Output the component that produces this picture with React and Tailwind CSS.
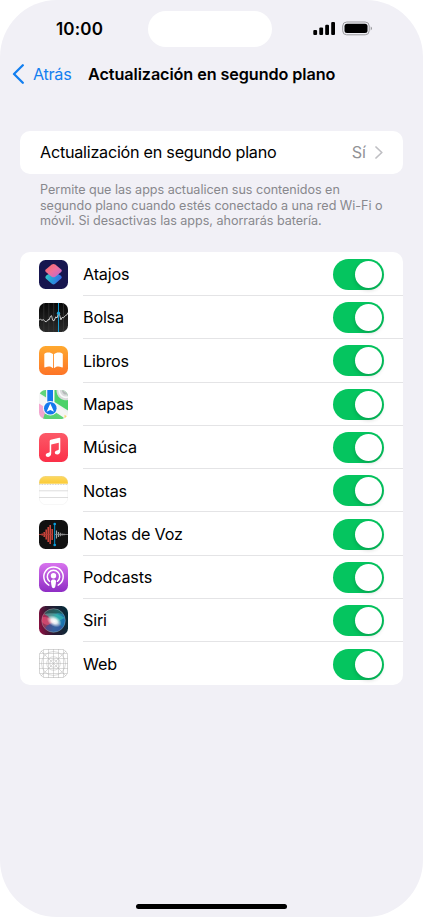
import { useState } from "react";

function ShortcutsIcon() {
  return (
    <>
      <defs>
        <linearGradient id="sc-top" x1="0" y1="0" x2="1" y2="1">
          <stop offset="0" stopColor="#fb6a5c" />
          <stop offset="0.5" stopColor="#ee6f9c" />
          <stop offset="1" stopColor="#b565d8" />
        </linearGradient>
        <linearGradient id="sc-bottom" x1="0" y1="0" x2="1" y2="0.3">
          <stop offset="0" stopColor="#3fd3bd" />
          <stop offset="0.5" stopColor="#25a0d8" />
          <stop offset="1" stopColor="#3a6fe6" />
        </linearGradient>
      </defs>
      <rect width="29" height="29" fill="#17164f" />
      <path d="M7.5 15.2 L13 12.2 Q14.5 11.2 16 12.2 L22 15.7 Q23.6 17.2 22.2 18.6 L16.2 23.8 Q14.5 25.1 12.8 23.8 L6.8 18.6 Q5.4 17 7.5 15.2Z" fill="url(#sc-bottom)" />
      <path d="M6.8 9.4 L12.7 4.5 Q14.5 3.3 16.3 4.5 L22.2 9.4 Q23.6 10.8 22.2 12.1 L16.3 16.7 Q14.5 17.9 12.7 16.7 L6.8 12.1 Q5.4 10.8 6.8 9.4Z" fill="url(#sc-top)" />
    </>
  );
}

function StocksIcon() {
  return (
    <>
      <defs>
        <linearGradient id="st-bg" x1="0" y1="0" x2="0" y2="1">
          <stop offset="0" stopColor="#080808" />
          <stop offset="1" stopColor="#2b2b2b" />
        </linearGradient>
      </defs>
      <rect width="29" height="29" fill="url(#st-bg)" />
      <path d="M4.8 0V29M9.8 0V29M14.7 0V29M24.5 0V29" stroke="#3a3a3a" strokeWidth="0.7" />
      <path d="M19.5 0V29" stroke="#159bd0" strokeWidth="1" />
      <path d="M0 17 L1.5 16.3 L3 17.3 L4.5 16.6 L6 18.5 L7.6 18.7 L9 16.5 L10 17 L11.5 13.3 L12.6 12.7 L13.6 17.2 L15 17.8 L16.8 13.8 L18 15 L19.5 10.2 L20.7 12.2 L21.9 16.8 L23 14.5 L24.5 14.8 L26.5 12.4 L27.8 12 L29 9.5" fill="none" stroke="#e4e4e4" strokeWidth="0.85" strokeLinejoin="round" />
      <circle cx="19.5" cy="10.2" r="1.6" fill="#1fa9df" />
    </>
  );
}

function BooksIcon() {
  return (
    <>
      <defs>
        <linearGradient id="bk-bg" x1="0" y1="0" x2="0" y2="1">
          <stop offset="0" stopColor="#ffa92f" />
          <stop offset="1" stopColor="#fd7427" />
        </linearGradient>
      </defs>
      <rect width="29" height="29" fill="url(#bk-bg)" />
      <path d="M14.1 8.3 C12 5.9 7.3 5.9 5.3 7.9 V20.8 Q5.3 22 6.5 21.3 C8.7 20.1 11.8 20.2 13.3 21.7 Q14.1 22.3 14.1 21.3Z" fill="#fff" />
      <path d="M15 8.3 C17.1 5.9 21.8 5.9 23.8 7.9 V20.8 Q23.8 22 22.6 21.3 C20.4 20.1 17.3 20.2 15.8 21.7 Q15 22.3 15 21.3Z" fill="#fff" />
    </>
  );
}

function MapsIcon() {
  return (
    <>
      <rect width="29" height="29" fill="#f0f1f2" />
      <path d="M0 0H7.2V7.5L0 3Z" fill="#5fd57a" />
      <path d="M0 12L8 12V29H0Z" fill="#f3a6cf" />
      <path d="M0 4.5L29 23V29H24L0 13.5Z" fill="#f5f5f5" />
      <path d="M15.5 0H29V20.5L15.5 12Z" fill="#4bd26a" />
      <path d="M10 18L24.5 27.5V29H8Z" fill="#5bd577" />
      <path d="M17.5 0A9.5 9.5 0 0 0 29 10V0Z" fill="#d9dcdc" />
      <path d="M20 0A7 7 0 0 0 29 7" fill="none" stroke="#f9fafa" strokeWidth="1.6" />
      <path d="M23 0A4 4 0 0 0 29 4" fill="#b3b9b8" />
      <path d="M25.5 29V24.8L29 27V29Z" fill="#f8d872" />
      <path d="M7.3 0H15V22H7.3Z" fill="#f8f9fa" />
      <path d="M8.3 0H14V14H8.3Z" fill="#1478ed" />
      <path d="M6 23L16 24.5L22 29H4Z" fill="#58d374" />
      <circle cx="11.3" cy="18.3" r="7.3" fill="#f8fafb" />
      <circle cx="11.3" cy="18.3" r="6.3" fill="#1478ed" />
      <path d="M11.3 13.6L15 21.8L11.3 20L7.6 21.8Z" fill="#fff" />
    </>
  );
}

function MusicIcon() {
  return (
    <>
      <defs>
        <linearGradient id="ms-bg" x1="0" y1="0" x2="0" y2="1">
          <stop offset="0" stopColor="#fc5a68" />
          <stop offset="1" stopColor="#fb2f48" />
        </linearGradient>
      </defs>
      <rect width="29" height="29" fill="url(#ms-bg)" />
      <path d="M10.7 8.1Q10.7 7 11.7 6.7L20.2 4.7Q21.3 4.5 21.3 5.6V18.2C21.3 20 20 21.3 18.3 21.5C16.9 21.6 15.8 20.8 15.8 19.6C15.8 18.4 16.7 17.7 18 17.4L19.2 17.1Q19.8 16.9 19.8 16.2V9.7L12.2 11.4V20.6C12.2 22.5 11 23.8 9.2 24C7.8 24.1 6.7 23.3 6.7 22.1C6.7 20.9 7.6 20.2 8.9 19.9L10.1 19.6Q10.7 19.4 10.7 18.7Z" fill="#fff" />
    </>
  );
}

function NotesIcon() {
  return (
    <>
      <defs>
        <linearGradient id="nt-top" x1="0" y1="0" x2="0" y2="1">
          <stop offset="0" stopColor="#fdd964" />
          <stop offset="1" stopColor="#fbcb36" />
        </linearGradient>
      </defs>
      <rect width="29" height="29" fill="#fff" />
      <rect width="29" height="7.7" fill="url(#nt-top)" />
      <path d="M0 8.5H29" stroke="#b8b4a8" strokeWidth="0.7" strokeDasharray="0.8 0.8" />
      <path d="M0 14.8H29M0 21.5H29" stroke="#cfcfcf" strokeWidth="0.7" />
      <rect x="0.25" y="0.25" width="28.5" height="28.5" rx="6.3" fill="none" stroke="#d6d6d6" strokeOpacity="0.55" strokeWidth="0.5" />
    </>
  );
}

function VoiceMemosIcon() {
  return (
    <>
      <rect width="29" height="29" fill="#111" />
      <path d="M1.2 14V15M3.2 13.5V15.5M5.2 12V17M7.2 9.5V19.5M9.2 7V22M11.2 5V24M13.2 9V20" stroke="#c9433a" strokeWidth="1.6" />
      <path d="M0 14.5H14" stroke="#b33c35" strokeWidth="0.8" />
      <path d="M17.5 10.5V18.5M19.4 12V17M21.3 12.8V16.2M23.1 13.4V15.6M25 13.8V15.2" stroke="#a7a7a9" strokeWidth="1.1" />
      <path d="M16 14.5H29" stroke="#929294" strokeWidth="0.8" />
      <path d="M15.7 4V25" stroke="#0b95d2" strokeWidth="1" />
      <circle cx="15.7" cy="4" r="1.3" fill="#0b9fdf" />
      <circle cx="15.7" cy="25" r="1.3" fill="#0b9fdf" />
    </>
  );
}

function PodcastsIcon() {
  return (
    <>
      <defs>
        <linearGradient id="pc-bg" x1="0" y1="0" x2="0" y2="1">
          <stop offset="0" stopColor="#d873ee" />
          <stop offset="1" stopColor="#8e2dc4" />
        </linearGradient>
      </defs>
      <rect width="29" height="29" fill="url(#pc-bg)" />
      <path d="M9.8 22.1A9.7 9.7 0 1 1 19.2 22.1" fill="none" stroke="#fff" strokeWidth="1.5" strokeLinecap="round" />
      <path d="M10.5 18.3A6.2 6.2 0 1 1 18.5 18.3" fill="none" stroke="#fff" strokeWidth="1.5" strokeLinecap="round" />
      <circle cx="14.5" cy="12.7" r="2.7" fill="#fff" />
      <path d="M12 18.2C12 15.8 17 15.8 17 18.2C17 20 16.5 22.6 16.1 24.1C15.7 25.5 13.3 25.5 12.9 24.1C12.5 22.6 12 20 12 18.2Z" fill="#fff" />
    </>
  );
}

function SiriIcon() {
  return (
    <>
      <defs>
        <linearGradient id="si-bg" x1="0" y1="0.6" x2="1" y2="0.4">
          <stop offset="0" stopColor="#86103f" />
          <stop offset="0.4" stopColor="#2c1a33" />
          <stop offset="1" stopColor="#052b38" />
        </linearGradient>
        <linearGradient id="si-orb" x1="0" y1="0.35" x2="1" y2="0.6">
          <stop offset="0" stopColor="#b81f4f" />
          <stop offset="0.35" stopColor="#7a4a66" />
          <stop offset="0.6" stopColor="#2f93a6" />
          <stop offset="1" stopColor="#1467b0" />
        </linearGradient>
        <radialGradient id="si-glow">
          <stop offset="0" stopColor="#fff" />
          <stop offset="0.4" stopColor="#fff" stopOpacity="0.85" />
          <stop offset="1" stopColor="#fff" stopOpacity="0" />
        </radialGradient>
      </defs>
      <rect width="29" height="29" fill="url(#si-bg)" />
      <circle cx="14.5" cy="14.5" r="11.8" fill="url(#si-orb)" />
      <path d="M5 7.5C9 1.5 20 1 24.5 8.5C19 6 12 8.5 5 7.5Z" fill="#1c5a58" opacity="0.85" />
      <path d="M5 8.5C11 6 19 7 26 12C22 13 20 16 16 16C12 14 9 9 5 8.5Z" fill="#35c9b4" opacity="0.55" />
      <path d="M3 11.5C8 10 12 12.5 16 16C12 20 6 20 3 16Z" fill="#f0527a" opacity="0.6" />
      <path d="M6 22C9 18.5 13 16 16 16C20 18 23 20 23.5 21.5C18.5 27.5 10.5 27.5 6 22Z" fill="#3a4f9c" opacity="0.7" />
      <ellipse cx="15.2" cy="15.2" rx="8" ry="5.2" fill="url(#si-glow)" transform="rotate(30 15.2 15.2)" />
      <circle cx="14.5" cy="14.5" r="11.8" fill="none" stroke="#b0c4c0" strokeOpacity="0.6" strokeWidth="0.6" />
    </>
  );
}

function WebIcon() {
  return (
    <>
      <rect width="29" height="29" fill="#fff" />
      <g fill="none" stroke="#b6b6b6" strokeWidth="0.5">
        <rect x="0.3" y="0.3" width="28.4" height="28.4" rx="6.3" stroke="#999" />
        <path d="M4.5 0V29M9.5 0V29M14.5 0V29M19.5 0V29M24.5 0V29" />
        <path d="M0 4.5H29M0 9.5H29M0 14.5H29M0 19.5H29M0 24.5H29" />
        <path d="M1.5 1.5L27.5 27.5M27.5 1.5L1.5 27.5" />
        <circle cx="14.5" cy="14.5" r="12" />
        <circle cx="14.5" cy="14.5" r="6.8" />
        <circle cx="14.5" cy="14.5" r="3.8" />
      </g>
    </>
  );
}

const apps = [
  { name: "Atajos", Icon: ShortcutsIcon },
  { name: "Bolsa", Icon: StocksIcon },
  { name: "Libros", Icon: BooksIcon },
  { name: "Mapas", Icon: MapsIcon },
  { name: "Música", Icon: MusicIcon },
  { name: "Notas", Icon: NotesIcon },
  { name: "Notas de Voz", Icon: VoiceMemosIcon },
  { name: "Podcasts", Icon: PodcastsIcon },
  { name: "Siri", Icon: SiriIcon },
  { name: "Web", Icon: WebIcon },
];

function Toggle({ on, onChange, label }) {
  return (
    <button
      role="switch"
      aria-checked={on}
      aria-label={label}
      onClick={onChange}
      className={`flex h-[31px] w-[51px] items-center rounded-full p-[2px] ${
        on ? "justify-end bg-[#05c55f]" : "justify-start bg-[#e9e9ea]"
      }`}
    >
      <span className="size-[27px] rounded-full bg-white shadow-[0_2px_4px_rgba(0,0,0,0.18)]" />
    </button>
  );
}

function StatusBar() {
  return (
    <div className="flex h-[47px] shrink-0 pt-[11px]">
      <div className="w-[148px] pt-[6px] pl-[56px] text-[17px] leading-[24px] font-semibold tracking-[0.15px]">
        10:00
      </div>
      <div className="h-9 w-[124px] rounded-full bg-white" />
      <svg className="mt-[9px] ml-[41px]" width="62" height="16" viewBox="0 0 62 16">
        <rect x="0.3" y="10" width="3.8" height="5" rx="1.1" />
        <rect x="6.3" y="7.5" width="3.8" height="7.5" rx="1.1" />
        <rect x="12.2" y="4.8" width="3.8" height="10.2" rx="1.1" />
        <rect x="18.2" y="2" width="3.8" height="13" rx="1.1" />
        <rect x="29.7" y="2" width="26.5" height="12.8" rx="4" fill="none" stroke="#9b9b9f" />
        <rect x="31.5" y="3.8" width="23" height="9.2" rx="2.5" />
        <path d="M57.7 6.6C59.5 7.3 59.5 9.7 57.7 10.4Z" fill="#9b9b9f" />
      </svg>
    </div>
  );
}

export default function App() {
  const [off, setOff] = useState([]);

  const toggle = (name) => {
    setOff((prev) =>
      prev.includes(name) ? prev.filter((n) => n !== name) : [...prev, name]
    );
  };

  return (
    <div className="h-[917px] w-[423px] overflow-hidden bg-white font-['Inter','Liberation_Sans',sans-serif] text-black">
      <div className="flex h-full flex-col rounded-[57px] bg-[#f1f0f6]">
        <StatusBar />

        <header className="flex h-[54px] shrink-0 items-center pl-[12px]">
          <button className="flex items-center text-[16.2px] text-[#137ff0]">
            <svg width="13" height="20" viewBox="0 0 13 20" fill="none">
              <path d="M10.8 1.3L2 10L10.8 18.7" stroke="currentColor" strokeWidth="2.3" strokeLinecap="round" strokeLinejoin="round" />
            </svg>
            <span className="ml-[8px] w-[55px] text-left tracking-[-0.3px]">Atrás</span>
          </button>
          <h1 className="text-[16.2px] font-semibold tracking-[-0.08px] whitespace-nowrap">
            Actualización en segundo plano
          </h1>
        </header>

        <main className="px-5 pt-[30px]">
          <div className="flex h-[43px] items-center rounded-[10px] bg-white pr-[20px] pl-5 text-[16.2px]">
            <span className="flex-1 tracking-[-0.26px] whitespace-nowrap">Actualización en segundo plano</span>
            <span className="text-[#929296]">Sí</span>
            <svg className="ml-[9px]" width="8" height="13" viewBox="0 0 8 13" fill="none">
              <path d="M1 1L6.8 6.5L1 12" stroke="#bfbfc3" strokeWidth="1.7" strokeLinecap="round" strokeLinejoin="round" />
            </svg>
          </div>

          <p className="pt-[8px] pl-5 text-[12.6px] leading-[15.7px] tracking-[-0.03px] whitespace-nowrap text-[#88888d]">
            Permite que las apps actualicen sus contenidos en
            <br />
            segundo plano cuando estés conectado a una red Wi-Fi o
            <br />
            móvil. Si desactivas las apps, ahorrarás batería.
          </p>

          <ul className="mt-[23px] overflow-hidden rounded-[10px] bg-white pt-[0.6px] pl-[19px]">
            {apps.map(({ name, Icon }, index) => (
              <li key={name} className="flex h-[43.3px] items-center last:h-[42.7px]">
                <svg className="mr-[15px] shrink-0 rounded-[6.5px]" width="29" height="29" viewBox="0 0 29 29">
                  <Icon />
                </svg>
                <div
                  className={`flex h-full flex-1 items-center justify-between pt-[0.8px] pr-[19px] ${
                    index < apps.length - 1 ? "border-b border-[#e4e4e6]" : ""
                  }`}
                >
                  <span className="text-[16.2px] tracking-[-0.2px]">{name}</span>
                  <Toggle on={!off.includes(name)} onChange={() => toggle(name)} label={name} />
                </div>
              </li>
            ))}
          </ul>
        </main>

        <div className="mt-auto mb-[8px] h-[5px] w-[151px] shrink-0 self-center rounded-full bg-black" />
      </div>
    </div>
  );
}
